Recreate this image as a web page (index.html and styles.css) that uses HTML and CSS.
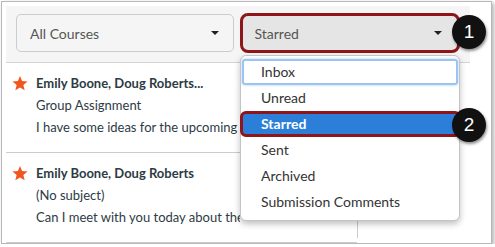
FILE: index.html
```html
<!DOCTYPE html>
<html lang="en">
<head>
    <meta charset="UTF-8">
    <meta name="viewport" content="width=device-width, initial-scale=1.0">
    <title>Conversations - Starred</title>
    <link rel="stylesheet" href="styles.css">
</head>
<body>
    <div class="frame">
        <div class="app">
            <div class="toolbar">
                <div class="select">
                    <span class="select-label">All Courses</span>
                    <span class="caret"></span>
                </div>
                <div class="select select-open">
                    <span class="select-label">Starred</span>
                    <span class="caret"></span>
                </div>
            </div>

            <div class="panes">
                <ul class="messages">
                    <li class="message">
                        <svg class="star" viewBox="0 0 24 24" width="16" height="16"><path d="M12 1.5l3.1 7.6 8.2.6-6.3 5.3 2 8-7-4.4-7 4.4 2-8L.7 9.7l8.2-.6z"/></svg>
                        <div class="message-body">
                            <div class="from">Emily Boone, Doug Roberts...</div>
                            <div class="subject">Group Assignment</div>
                            <div class="preview">I have some ideas for the upcoming project</div>
                        </div>
                    </li>
                    <li class="message">
                        <svg class="star" viewBox="0 0 24 24" width="16" height="16"><path d="M12 1.5l3.1 7.6 8.2.6-6.3 5.3 2 8-7-4.4-7 4.4 2-8L.7 9.7l8.2-.6z"/></svg>
                        <div class="message-body">
                            <div class="from">Emily Boone, Doug Roberts</div>
                            <div class="subject">(No subject)</div>
                            <div class="preview">Can I meet with you today about the quiz?</div>
                        </div>
                    </li>
                </ul>
                <div class="detail"></div>
            </div>

            <ul class="menu">
                <li class="menu-item focused">Inbox</li>
                <li class="menu-item">Unread</li>
                <li class="menu-item selected">Starred</li>
                <li class="menu-item">Sent</li>
                <li class="menu-item">Archived</li>
                <li class="menu-item">Submission Comments</li>
            </ul>

            <span class="callout callout-1">1</span>
            <span class="callout callout-2">2</span>
        </div>
    </div>
</body>
</html>
```

FILE: styles.css
```css
body {
    margin: 0;
    background-color: #fff;
    font-family: 'Lato', 'Liberation Sans', sans-serif;
    color: #333;
}
.frame {
    margin: 1px 0 0 1px;
    width: 489px;
    height: 241px;
    border: 1px solid #b8b8b8;
    box-shadow: 2px 2px 4px rgba(0, 0, 0, 0.3);
    background-color: #fff;
    overflow: hidden;
}
.app {
    position: relative;
    margin: 4px 0 0 4px;
    width: 464px;
}
.toolbar {
    display: flex;
    gap: 6px;
    height: 57px;
    box-sizing: border-box;
    padding: 8px 10px;
    background-color: #f5f5f5;
    border-bottom: 1px solid #d4d4d4;
}
.select {
    display: flex;
    align-items: center;
    justify-content: space-between;
    box-sizing: border-box;
    width: 220px;
    height: 38px;
    padding: 0 14px 0 13px;
    border: 1px solid #c8cdd1;
    border-radius: 5px;
    background-color: #f5f5f5;
    font-size: 14px;
    color: #555;
}
.select-open {
    width: 221px;
    height: 40px;
    margin-top: -1px;
    padding-left: 11px;
    padding-right: 15px;
    border: 3px solid #8e1519;
    border-radius: 8px;
    background-color: #e5e5e5;
}
.caret {
    width: 0;
    height: 0;
    border-left: 4px solid transparent;
    border-right: 4px solid transparent;
    border-top: 4px solid #222;
}
.panes {
    display: flex;
    height: 175px;
}
.messages {
    list-style: none;
    margin: 0;
    padding: 0;
    width: 351px;
    border-right: 1px solid #c8cdd1;
}
.message {
    display: flex;
    gap: 8px;
    padding: 9px 0 14px 6px;
    border-bottom: 1px solid #c8cdd1;
}
.star {
    flex: none;
    margin-top: 3px;
    fill: #f0561d;
}
.message-body {
    min-width: 0;
    font-size: 13px;
    line-height: 22px;
    color: #2d3b45;
}
.from {
    font-weight: bold;
}
/* the open menu hides the rest of the line */
.preview {
    max-width: 204px;
    white-space: nowrap;
    overflow: hidden;
}
.detail {
    flex: 1;
}
.menu {
    position: absolute;
    left: 234px;
    top: 49px;
    width: 220px;
    box-sizing: border-box;
    margin: 0;
    padding: 3px 0 5px;
    list-style: none;
    background-color: #fff;
    border: 1px solid #c4c4c4;
    border-radius: 6px;
    box-shadow: 0 3px 6px rgba(0, 0, 0, 0.25);
}
.menu-item {
    height: 26px;
    line-height: 26px;
    padding-left: 20px;
    font-size: 14px;
    color: #333;
}
.focused {
    margin: 0 1px;
    padding-left: 19px;
    border-radius: 3px;
    box-shadow: inset 0 0 0 2px #9cc3f2, 0 0 3px #a9cdf5;
}
.selected {
    margin: 0 -2px 0 -1px;
    height: 20px;
    line-height: 20px;
    padding-left: 18px;
    border: 3px solid #8e1519;
    border-radius: 6px;
    background-color: #2c7fd8;
    color: #fff;
    font-weight: bold;
}
.callout {
    position: absolute;
    left: 446px;
    width: 34px;
    height: 34px;
    border-radius: 50%;
    background-color: #111;
    color: #fff;
    font-family: 'Liberation Sans', sans-serif;
    font-size: 19px;
    line-height: 34px;
    text-align: center;
    box-shadow: 1px 2px 3px rgba(0, 0, 0, 0.45);
}
.callout-1 {
    top: 9px;
}
.callout-2 {
    top: 102px;
}
```
